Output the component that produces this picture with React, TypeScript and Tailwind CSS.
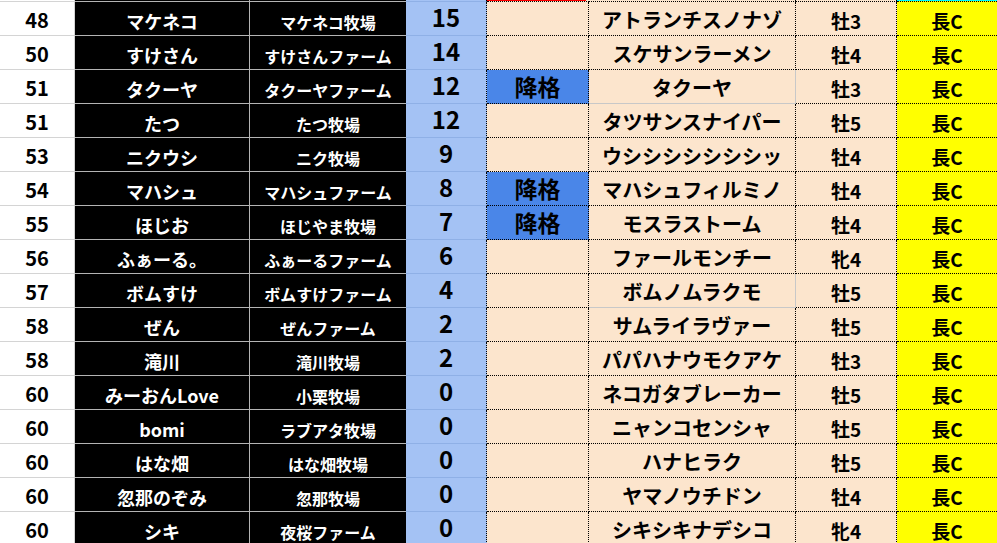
const rows: [string, string, string, string, boolean, string, string][] = [
  ["48", "マケネコ", "マケネコ牧場", "15", false, "アトランチスノナゾ", "牡3"],
  ["50", "すけさん", "すけさんファーム", "14", false, "スケサンラーメン", "牡4"],
  ["51", "タクーヤ", "タクーヤファーム", "12", true, "タクーヤ", "牡3"],
  ["51", "たつ", "たつ牧場", "12", false, "タツサンスナイパー", "牡5"],
  ["53", "ニクウシ", "ニク牧場", "9", false, "ウシシシシシシシッ", "牡4"],
  ["54", "マハシュ", "マハシュファーム", "8", true, "マハシュフィルミノ", "牡4"],
  ["55", "ほじお", "ほじやま牧場", "7", true, "モスラストーム", "牡4"],
  ["56", "ふぁーる。", "ふぁーるファーム", "6", false, "ファールモンチー", "牝4"],
  ["57", "ボムすけ", "ボムすけファーム", "4", false, "ボムノムラクモ", "牡5"],
  ["58", "ぜん", "ぜんファーム", "2", false, "サムライラヴァー", "牡5"],
  ["58", "滝川", "滝川牧場", "2", false, "パパハナウモクアケ", "牡3"],
  ["60", "みーおんLove", "小栗牧場", "0", false, "ネコガタブレーカー", "牡5"],
  ["60", "bomi", "ラブアタ牧場", "0", false, "ニャンコセンシャ", "牡5"],
  ["60", "はな畑", "はな畑牧場", "0", false, "ハナヒラク", "牡5"],
  ["60", "忽那のぞみ", "忽那牧場", "0", false, "ヤマノウチドン", "牡4"],
  ["60", "シキ", "夜桜ファーム", "0", false, "シキシキナデシコ", "牝4"],
];

// cells in col 6 that kept the sheet's plain gridlines
const plain = new Set([2, 8]);

const grid = "grid grid-cols-[75px_175px_156px_81px_102px_207px_101px_100px]";

export default function App() {
  return (
    <div
      className="w-[997px] h-[543px] overflow-hidden bg-white font-bold"
      style={{ fontFamily: '"Noto Sans CJK JP", "Noto Sans", sans-serif' }}
    >
      {/* sliver of the row above */}
      <div className={`${grid} h-[2px]`}>
        <div className="bg-white [border-right:1px_solid_#d4d4d4] [border-bottom:1px_solid_#d4d4d4]" />
        <div className="bg-black [border-right:1px_solid_#b4b4b4] [border-bottom:1px_solid_#b4b4b4]" />
        <div className="bg-black [border-bottom:1px_solid_#b4b4b4]" />
        <div className="bg-[#a4c2f4] [border-right:1px_dotted_#000] [border-bottom:1px_solid_#8fb0e6]" />
        <div className="bg-[#fce5cd] flex flex-col">
          <div className="h-[1px] w-[99px] bg-[#ff0000]" />
          <div className="h-[1px] [border-bottom:1px_dotted_#000]" />
        </div>
        <div className="bg-[#fce5cd] [border-right:1px_dotted_#000] [border-bottom:1px_dotted_#000]" />
        <div className="bg-[#fce5cd] [border-right:1px_dotted_#000] [border-bottom:1px_dotted_#000]" />
        <div className="bg-[#ffff00] flex flex-col">
          <div className="h-[1px] bg-[#00ffff]" />
          <div className="h-[1px] [border-bottom:1px_dotted_#000]" />
        </div>
      </div>

      {rows.map(([rank, name, farm, pts, down, horse, sex], i) => (
        <div key={i} className={`${grid} h-[34px] leading-none`}>
          <div className="flex items-end justify-center pb-[5px] bg-white text-black text-[20px] [border-right:1px_solid_#d4d4d4] [border-bottom:1px_solid_#d4d4d4]">
            {rank}
          </div>
          <div className="flex items-end justify-center pb-[5px] bg-black text-white text-[18px] [border-right:1px_solid_#b4b4b4] [border-bottom:1px_solid_#b4b4b4]">
            {name}
          </div>
          <div className="flex items-end justify-center pb-[5px] bg-black text-white text-[16px] [border-bottom:1px_solid_#b4b4b4]">
            {farm}
          </div>
          <div className="flex items-end justify-center pb-[6px] bg-[#a4c2f4] text-black text-[24px] [border-right:1px_dotted_#000] [border-bottom:1px_solid_#8fb0e6]">
            {pts}
          </div>
          <div
            className={`flex items-end justify-center pb-[5px] text-black text-[23px] [border-right:1px_dotted_#000] [border-bottom:1px_dotted_#000] ${
              down ? "bg-[#4a86e8]" : "bg-[#fce5cd]"
            }`}
          >
            {down ? "降格" : ""}
          </div>
          <div
            className={`flex items-end justify-center pb-[5px] bg-[#fce5cd] text-black text-[20px] ${
              plain.has(i)
                ? "[border-right:1px_solid_#c8c8c8] [border-bottom:1px_solid_#c8c8c8]"
                : "[border-right:1px_dotted_#000] [border-bottom:1px_dotted_#000]"
            }`}
          >
            {horse}
          </div>
          <div className="flex items-end justify-center pb-[5px] bg-[#fce5cd] text-black text-[19px] [border-right:1px_dotted_#000] [border-bottom:1px_dotted_#000]">
            {sex}
          </div>
          <div className="flex items-end justify-center pb-[5px] bg-[#ffff00] text-black text-[19px] [border-bottom:1px_dotted_#000]">
            長C
          </div>
        </div>
      ))}
    </div>
  );
}
